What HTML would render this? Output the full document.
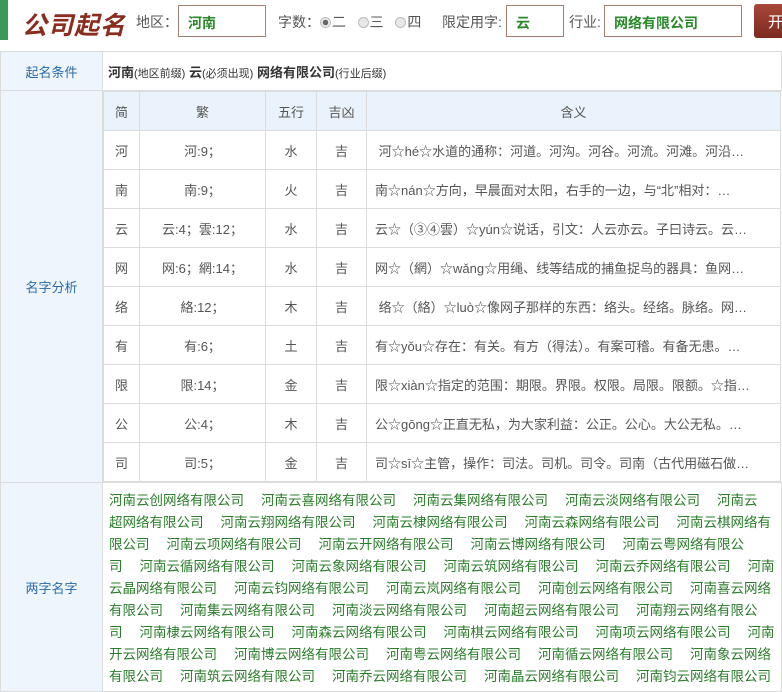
<!DOCTYPE html>
<html><head><meta charset="utf-8"><style>
*{margin:0;padding:0;box-sizing:border-box}
body{width:782px;height:689px;overflow:hidden;background:#fff;font-family:"Liberation Sans","Noto Sans CJK SC",sans-serif;font-size:13px;color:#555;position:relative}
.top{position:absolute;left:0;top:0;width:782px;height:52px}
.logo{position:absolute;left:0;top:0;width:8px;height:40px;background:#3a9a5a}
.title{position:absolute;left:22px;top:6px;font-size:25px;font-weight:bold;font-style:italic;color:#8a2c1e;letter-spacing:1px}
.lbl{position:absolute;top:12px;font-size:14px;color:#555}
.inp{position:absolute;top:5px;height:32px;border:1px solid #a08070;color:#2a8a2a;font-weight:bold;font-size:14px;padding:7px 0 0 9px}
.rad{display:inline-block;width:11px;height:11px;border-radius:50%;border:1px solid #bbb;background:#e8e8e8;vertical-align:-1px;margin-right:1px}
.rad.on{background:radial-gradient(circle,#666 0 2.5px,#eee 3px)}
.btn{position:absolute;left:754px;top:4px;width:40px;height:34px;background:linear-gradient(#a8483a,#7c2a1e);color:#fff;font-size:15px;padding:7px 0 0 14px;border-radius:3px}
table{border-collapse:collapse;position:absolute}
.outer{left:0;top:51px;width:782px}
.outer>tbody>tr>td{border:1px solid #dcdcdc}
.lc{width:105px;background:#eef5fc;color:#2a6aa8;text-align:center;font-size:13px}
.inner{position:static;width:678px}
.inner td{border:1px solid #dcdcdc;height:39px;text-align:center;color:#555}
.inner tr:first-child td{background:#eaf3fb}
.inner td.m{text-align:left;padding-left:8px;white-space:nowrap;overflow:hidden;max-width:412px}
.names{padding:7px 0 0 6px;line-height:22px;color:#2a7d2a;font-size:13.5px;height:209px;vertical-align:top;white-space:nowrap}
.names div{overflow:hidden;width:672px}
.names i{display:inline-block;width:17px}
</style></head><body>
<div class="top">
<div class="logo"></div>
<div class="title">公司起名</div>
<div class="lbl" style="left:136px">地区：</div>
<div class="inp" style="left:178px;width:88px">河南</div>
<div class="lbl" style="left:278px">字数：<span class="rad on"></span>二 &nbsp; <span class="rad"></span>三 &nbsp; <span class="rad"></span>四</div>
<div class="lbl" style="left:442px">限定用字:</div>
<div class="inp" style="left:506px;width:58px">云</div>
<div class="lbl" style="left:569px">行业:</div>
<div class="inp" style="left:604px;width:138px">网络有限公司</div>
<div class="btn">开</div>
</div>
<table class="outer"><tbody>
<tr><td class="lc" style="height:39px">起名条件</td><td style="padding-left:5px;color:#333"><b>河南</b><span style="font-size:11px">(地区前缀)</span> <b>云</b><span style="font-size:11px">(必须出现)</span> <b>网络有限公司</b><span style="font-size:11px">(行业后缀)</span></td></tr>
<tr><td class="lc">名字分析</td><td style="padding:0;border:none">
<table class="inner"><tbody>
<tr><td style="width:36px;height:38px">简</td><td style="width:126px">繁</td><td style="width:51px">五行</td><td style="width:50px">吉凶</td><td>含义</td></tr>
<tr><td>河</td><td>河:9；</td><td>水</td><td>吉</td><td class="m">&nbsp;河☆hé☆水道的通称：河道。河沟。河谷。河流。河滩。河沿…</td></tr>
<tr><td>南</td><td>南:9；</td><td>火</td><td>吉</td><td class="m">南☆nán☆方向，早晨面对太阳，右手的一边，与“北”相对：…</td></tr>
<tr><td>云</td><td>云:4；雲:12；</td><td>水</td><td>吉</td><td class="m">云☆（③④雲）☆yún☆说话，引文：人云亦云。子曰诗云。云…</td></tr>
<tr><td>网</td><td>网:6；網:14；</td><td>水</td><td>吉</td><td class="m">网☆（網）☆wǎng☆用绳、线等结成的捕鱼捉鸟的器具：鱼网…</td></tr>
<tr><td>络</td><td>絡:12；</td><td>木</td><td>吉</td><td class="m">&nbsp;络☆（絡）☆luò☆像网子那样的东西：络头。经络。脉络。网…</td></tr>
<tr><td>有</td><td>有:6；</td><td>土</td><td>吉</td><td class="m">有☆yǒu☆存在：有关。有方（得法）。有案可稽。有备无患。…</td></tr>
<tr><td>限</td><td>限:14；</td><td>金</td><td>吉</td><td class="m">限☆xiàn☆指定的范围：期限。界限。权限。局限。限额。☆指…</td></tr>
<tr><td>公</td><td>公:4；</td><td>木</td><td>吉</td><td class="m">公☆gōng☆正直无私，为大家利益：公正。公心。大公无私。…</td></tr>
<tr><td>司</td><td>司:5；</td><td>金</td><td>吉</td><td class="m">司☆sī☆主管，操作：司法。司机。司令。司南（古代用磁石做…</td></tr>
</tbody></table></td></tr>
<tr><td class="lc" style="vertical-align:middle">两字名字</td><td class="names">
<div>河南云创网络有限公司<i></i>河南云喜网络有限公司<i></i>河南云集网络有限公司<i></i>河南云淡网络有限公司<i></i>河南云</div>
<div>超网络有限公司<i></i>河南云翔网络有限公司<i></i>河南云棣网络有限公司<i></i>河南云森网络有限公司<i></i>河南云棋网络有</div>
<div>限公司<i></i>河南云项网络有限公司<i></i>河南云开网络有限公司<i></i>河南云博网络有限公司<i></i>河南云粤网络有限公</div>
<div>司<i></i>河南云循网络有限公司<i></i>河南云象网络有限公司<i></i>河南云筑网络有限公司<i></i>河南云乔网络有限公司<i></i>河南</div>
<div>云晶网络有限公司<i></i>河南云钧网络有限公司<i></i>河南云岚网络有限公司<i></i>河南创云网络有限公司<i></i>河南喜云网络</div>
<div>有限公司<i></i>河南集云网络有限公司<i></i>河南淡云网络有限公司<i></i>河南超云网络有限公司<i></i>河南翔云网络有限公</div>
<div>司<i></i>河南棣云网络有限公司<i></i>河南森云网络有限公司<i></i>河南棋云网络有限公司<i></i>河南项云网络有限公司<i></i>河南</div>
<div>开云网络有限公司<i></i>河南博云网络有限公司<i></i>河南粤云网络有限公司<i></i>河南循云网络有限公司<i></i>河南象云网络</div>
<div>有限公司<i></i>河南筑云网络有限公司<i></i>河南乔云网络有限公司<i></i>河南晶云网络有限公司<i></i>河南钧云网络有限公司</div>
</td></tr>
</tbody></table>
</body></html>
